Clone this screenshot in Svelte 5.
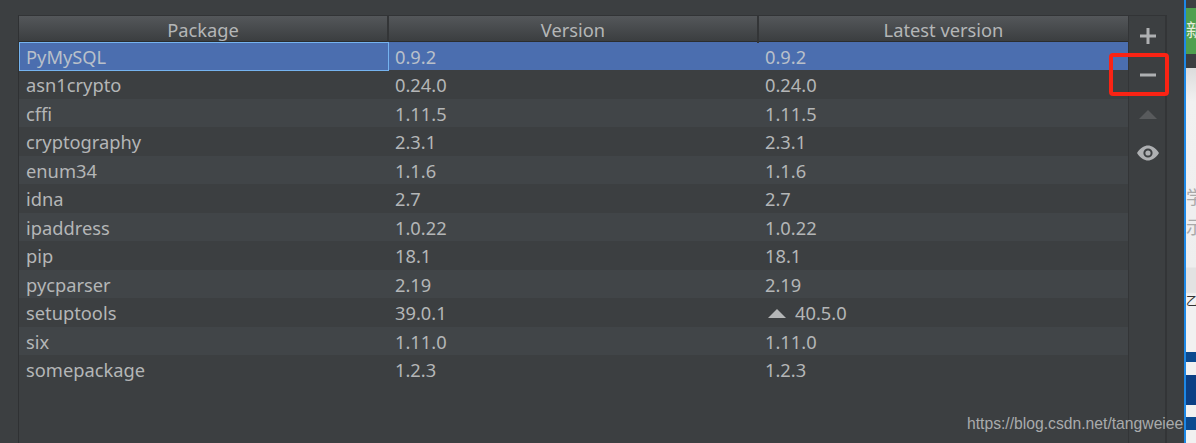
<script>
  const rows = [
    ['PyMySQL', '0.9.2', '0.9.2'],
    ['asn1crypto', '0.24.0', '0.24.0'],
    ['cffi', '1.11.5', '1.11.5'],
    ['cryptography', '2.3.1', '2.3.1'],
    ['enum34', '1.1.6', '1.1.6'],
    ['idna', '2.7', '2.7'],
    ['ipaddress', '1.0.22', '1.0.22'],
    ['pip', '18.1', '18.1'],
    ['pycparser', '2.19', '2.19'],
    ['setuptools', '39.0.1', '40.5.0', true],
    ['six', '1.11.0', '1.11.0'],
    ['somepackage', '1.2.3', '1.2.3']
  ];
</script>

<div class="page">
  <div class="dialog">
    <div class="panel">
      <div class="table">
        <div class="head">
          <div class="hcell">Package</div>
          <div class="hcell">Version</div>
          <div class="hcell">Latest version</div>
        </div>
        {#each rows as r, i}
          <div class="row" class:odd={i % 2 === 0} class:sel={i === 0}>
            <div class="cell first" class:focus={i === 0}>{r[0]}</div>
            <div class="cell">{r[1]}</div>
            <div class="cell">
              {#if r[3]}
                <svg class="up" width="18" height="9" viewBox="0 0 18 9"><path d="M0 9 L9 0 L18 9 Z" fill="#b4b6b7" /></svg>
              {/if}{r[2]}
            </div>
          </div>
        {/each}
      </div>
      <div class="tools">
        <svg class="tool" width="16" height="16" viewBox="0 0 16 16"><path d="M0 8h16M8 0v16" stroke="#aeb0b2" stroke-width="3" /></svg>
        <svg class="tool" width="16" height="16" viewBox="0 0 16 16"><path d="M0 8h16" stroke="#aeb0b2" stroke-width="3" /></svg>
        <svg class="tool" width="18" height="16" viewBox="0 0 18 16"><path d="M0 13 L9 4 L18 13 Z" fill="#585a5c" /></svg>
        <svg class="tool" width="22" height="16" viewBox="0 0 22 16">
          <path fill-rule="evenodd" fill="#aeb0b2" d="M0 8 C3.5 2.5 7.5 0.5 11 0.5 S18.500 2.500 22 8 C18.500 13.500 14.500 15.500 11 15.500 S3.500 13.500 0 8 Z M11 3.400 A4.600 4.600 0 1 0 11 12.600 A4.600 4.600 0 1 0 11 3.400 Z" />
          <circle cx="11" cy="8" r="2.600" fill="#aeb0b2" />
        </svg>
      </div>
    </div>
  </div>
  <div class="side">
    <div class="s-top"></div>
    <div class="s-green">新</div>
    <div class="s-dark"></div>
    <div class="s-light">
      <span class="g1">学</span>
      <span class="g2">示</span>
      <span class="g3">乙</span>
    </div>
    <div class="s-navy1"></div>
    <div class="s-white"></div>
    <div class="s-navy2"></div>
    <div class="s-white b"></div>
    <div class="s-navy1 c"></div>
    <div class="s-white d"></div>
  </div>
  <div class="minus-box"></div>
  <div class="mark">https://blog.csdn.net/tangweiee</div>
</div>

<style>
  :global(body) { margin: 0; background: #3c3f41; }
  .page {
    position: relative;
    display: grid;
    grid-template-columns: 1184px 12px;
    width: 1196px;
    height: 443px;
    overflow: hidden;
    font-family: "Noto Sans", "Open Sans", sans-serif;
    font-size: 18.3px;
    color: #b4b6b7;
  }
  .dialog {
    padding: 15px 17px 0 18px;
    box-sizing: border-box;
    background: #3c3f41;
    height: 443px;
  }
  .panel {
    display: flex;
    height: 100%;
    border-left: 1px solid #2f3133;
    border-top: 1px solid #323436;
  }
  .table { flex: 0 0 1109px; }
  .head {
    display: grid;
    grid-template-columns: 370px 370px 369px;
    height: 25px;
    background: linear-gradient(#54575a, #3b3e40);
    border-bottom: 1px solid #2b2d2e;
  }
  .hcell {
    text-align: center;
    line-height: 27px;
    border-right: 2px solid #333537;
    box-sizing: border-box;
  }
  .hcell:last-child { border-right: 0; }
  .row {
    display: grid;
    grid-template-columns: 369.5px 370px 369.5px;
    height: 28.46px;
    line-height: 28.4px;
    background: #3c3f41;
  }
  .row.odd { background: #414548; }
  .row.sel { background: #4b6eaf; color: #b9c0ca; }
  .cell {
    padding: 1px 0 0 6.5px;
    white-space: nowrap;
    box-sizing: border-box;
    height: 100%;
  }
  .cell.first { padding-left: 7px; }
  .cell.focus {
    border: 1px solid #75b3ef;
    padding: 1px 0 0 6px;
    line-height: 26px;
  }
  .up { margin: 0 9px 0 3px; vertical-align: 2px; }
  .tools {
    flex: 1;
    padding: 12px 0 0 1px;
    border-left: 1px solid #333537;
    border-right: 2px solid #333537;
    display: flex;
    flex-direction: column;
    align-items: center;
  }
  .tool { flex: none; margin-bottom: 23px; }
  .side {
    display: flex;
    flex-direction: column;
    border-left: 2px solid #1e88e5;
    box-sizing: border-box;
    height: 443px;
    overflow: hidden;
    font-family: "Noto Sans CJK SC", sans-serif;
  }
  .s-top { height: 8px; background: #3c3f41; }
  .s-green {
    height: 46px;
    background: #4fa04f;
    color: #e6eedd;
    font-size: 18px;
    line-height: 42px;
    overflow: hidden;
    white-space: nowrap;
  }
  .s-dark { height: 14px; background: #3c3f41; }
  .s-light {
    height: 284px;
    background: linear-gradient(#dcdcdc, #f1f1f1 12%, #eeeeee 70%, #e2e2e2 70.5%, #e2e2e2 79%, #f1f1f1 79.5%);
    color: #a9a9a9;
    font-size: 18px;
    line-height: 20px;
    display: flex;
    flex-direction: column;
    padding-top: 118px;
    box-sizing: border-box;
  }
  .g2 { margin-top: 10px; }
  .g3 { margin-top: 55px; color: #333; font-size: 12px; }
  .s-navy1 { height: 10px; background: #0b4a8f; }
  .s-navy1.c { height: 13px; }
  .s-white { height: 13px; background: #f1f1f1; }
  .s-white.b { height: 12px; }
  .s-white.d { flex: 1; }
  .s-navy2 { height: 30px; background: #0b3f84; }
  .minus-box {
    position: absolute;
    left: 1109px;
    top: 53px;
    width: 60px;
    height: 43px;
    border: 4px solid #fa2314;
    border-radius: 4px;
    box-sizing: border-box;
  }
  .mark {
    position: absolute;
    left: 967px;
    top: 415px;
    font-family: "Liberation Sans", sans-serif;
    font-size: 15.7px;
    color: #a9abac;
    white-space: nowrap;
  }
</style>
